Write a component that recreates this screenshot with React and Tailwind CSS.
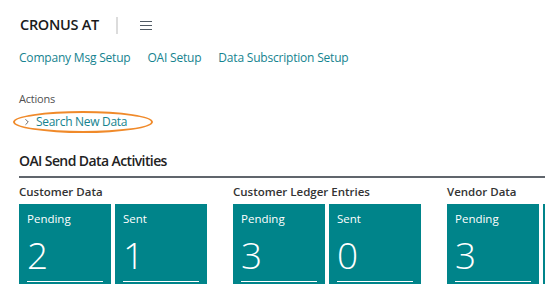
import { ChevronRight } from 'lucide-react'

const groups = [
  { title: 'Customer Data', tiles: [{ label: 'Pending', value: 2 }, { label: 'Sent', value: 1 }] },
  { title: 'Customer Ledger Entries', tiles: [{ label: 'Pending', value: 3 }, { label: 'Sent', value: 0 }] },
  { title: 'Vendor Data', tiles: [{ label: 'Pending', value: 3 }, { label: 'Sent', value: 0 }] },
]

const Tile = ({ label, value }) => (
  <div className="w-[92px] h-[80px] shrink-0 bg-[#00848a] text-white px-2 pt-[7px] flex flex-col">
    <p className="text-[11.5px] leading-[16px]">{label}</p>
    <p className="text-[37px] leading-[38px] font-light mt-[9px]">{value}</p>
    <div className="mt-[7px] border-b border-white" />
  </div>
)

export default function App() {
  return (
    <div className="w-[545px] h-[285px] overflow-hidden bg-white" style={{ fontFamily: '"Open Sans", "Noto Sans", sans-serif' }}>
      {/* Top Bar */}
      <div className="flex items-center pl-[20px] pt-[16px] h-[34px]">
        <span className="text-[14.5px] font-semibold text-[#1b1b1b] tracking-[-0.3px]">CRONUS AT</span>
        <div className="ml-[17px] w-[2px] h-[17px] bg-[#dcdcdc]" />
        <div className="ml-[22px] flex flex-col gap-[3px]">
          <div className="w-[12px] h-px bg-[#505a64]" />
          <div className="w-[12px] h-px bg-[#505a64]" />
          <div className="w-[12px] h-px bg-[#505a64]" />
        </div>
      </div>
      <div className="flex gap-[17px] pl-[19px] mt-[15px] text-[12px] text-[#15838f] tracking-[-0.2px]">
        <span>Company Msg Setup</span>
        <span>OAI Setup</span>
        <span>Data Subscription Setup</span>
      </div>

      <div className="pl-[19px] mt-[24px]">
        <p className="text-[11px] text-[#505050] tracking-[-0.2px]">Actions</p>
        <div className="relative flex items-center mt-[5px] pl-[3px] h-[18px]">
          <ChevronRight className="w-[10px] h-[10px] text-[#505050]" strokeWidth={2} />
          <span className="ml-[4px] text-[12px] text-[#15838f] tracking-[-0.3px]">Search New Data</span>
          <div className="absolute left-[-6px] top-[-2px] w-[140px] h-[22px] rounded-[50%] border-2 border-[#f08a2a]" />
        </div>
      </div>

      <div className="pl-[19px] mt-[20px]">
        <p className="text-[14px] font-semibold text-[#222] tracking-[-0.6px] leading-[20px]">OAI Send Data Activities</p>
        <div className="mt-[5px] h-[2px] bg-[#60656c]" />
        <div className="flex gap-[26px] mt-[7px]">
          {groups.map((g) => (
            <div key={g.title} className="shrink-0">
              <p className="text-[11.5px] font-semibold text-[#333] leading-[14px]">{g.title}</p>
              <div className="flex gap-[4px] mt-[5px]">
                {g.tiles.map((t) => (
                  <Tile key={t.label} {...t} />
                ))}
              </div>
            </div>
          ))}
        </div>
      </div>
    </div>
  )
}
